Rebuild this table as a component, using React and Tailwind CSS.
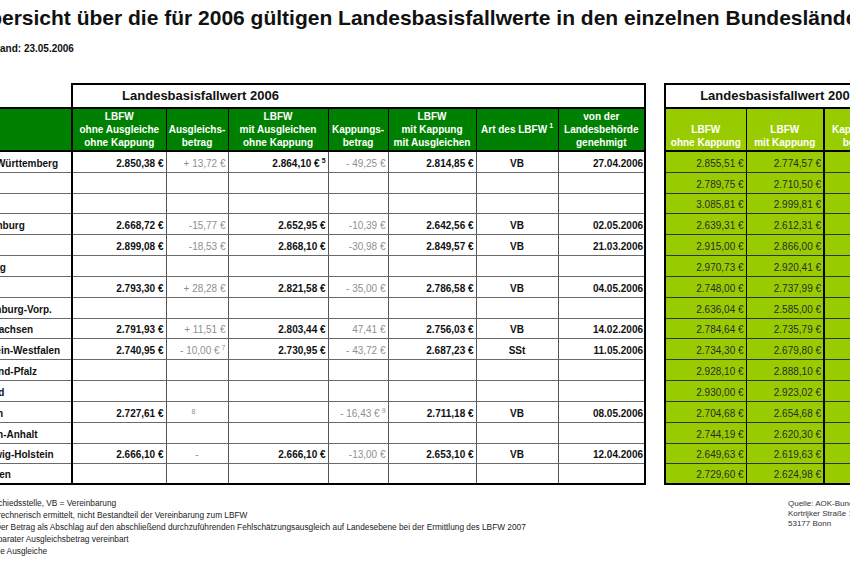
import React from "react";

const ROWH = [
  "h-[21px]", "h-[21px]", "h-[20px]", "h-[21px]", "h-[21px]", "h-[21px]", "h-[21px]", "h-[21px]",
  "h-[20px]", "h-[21px]", "h-[21px]", "h-[21px]", "h-[21px]", "h-[21px]", "h-[20px]", "h-[21px]",
];

const rows = [
  { n: "Baden-Württemberg", a: "2.850,38 €", b: "+ 13,72 €", c: "2.864,10 €", cs: "5", d: "- 49,25 €", e: "2.814,85 €", f: "VB", g: "27.04.2006" },
  { n: "Bayern" },
  { n: "Berlin" },
  { n: "Brandenburg", a: "2.668,72 €", b: "-15,77 €", c: "2.652,95 €", d: "-10,39 €", e: "2.642,56 €", f: "VB", g: "02.05.2006" },
  { n: "Bremen", a: "2.899,08 €", b: "-18,53 €", c: "2.868,10 €", d: "-30,98 €", e: "2.849,57 €", f: "VB", g: "21.03.2006" },
  { n: "Hamburg" },
  { n: "Hessen", a: "2.793,30 €", b: "+ 28,28 €", c: "2.821,58 €", d: "- 35,00 €", e: "2.786,58 €", f: "VB", g: "04.05.2006" },
  { n: "Mecklenburg-Vorp." },
  { n: "Niedersachsen", a: "2.791,93 €", b: "+ 11,51 €", c: "2.803,44 €", d: "47,41 €", e: "2.756,03 €", f: "VB", g: "14.02.2006" },
  { n: "Nordrhein-Westfalen", a: "2.740,95 €", b: "- 10,00 €", bs: "7", c: "2.730,95 €", d: "- 43,72 €", e: "2.687,23 €", f: "SSt", g: "11.05.2006" },
  { n: "Rheinland-Pfalz" },
  { n: "Saarland" },
  { n: "Sachsen", a: "2.727,61 €", b8: true, d: "- 16,43 €", ds: "9", e: "2.711,18 €", f: "VB", g: "08.05.2006" },
  { n: "Sachsen-Anhalt" },
  { n: "Schleswig-Holstein", a: "2.666,10 €", b: "-", bc: true, c: "2.666,10 €", d: "-13,00 €", e: "2.653,10 €", f: "VB", g: "12.04.2006" },
  { n: "Thüringen" },
];

const green = [
  ["2.855,51 €", "2.774,57 €"],
  ["2.789,75 €", "2.710,50 €"],
  ["3.085,81 €", "2.999,81 €"],
  ["2.639,31 €", "2.612,31 €"],
  ["2.915,00 €", "2.866,00 €"],
  ["2.970,73 €", "2.920,41 €"],
  ["2.748,00 €", "2.737,99 €"],
  ["2.636,04 €", "2.585,00 €"],
  ["2.784,64 €", "2.735,79 €"],
  ["2.734,30 €", "2.679,80 €"],
  ["2.928,10 €", "2.888,10 €"],
  ["2.930,00 €", "2.923,02 €"],
  ["2.704,68 €", "2.654,68 €"],
  ["2.744,19 €", "2.620,30 €"],
  ["2.649,63 €", "2.619,63 €"],
  ["2.729,60 €", "2.624,98 €"],
];

function Sup({ children }) {
  return <span className="text-[7px] leading-[7px] align-top relative top-[-1px] ml-[2px]">{children}</span>;
}

function MainTable() {
  const hd = "bg-[#008000] text-white font-bold text-[10px] leading-[13px] text-center align-bottom pb-[1px] border-t-2 border-b-2 border-black border-r px-0 whitespace-nowrap";
  return (
    <table className="table-fixed border-collapse w-[685px] shrink-0">
      <colgroup>
        <col className="w-[112px]" />
        <col className="w-[94px]" />
        <col className="w-[62px]" />
        <col className="w-[100px]" />
        <col className="w-[60px]" />
        <col className="w-[88px]" />
        <col className="w-[82px]" />
        <col className="w-[87px]" />
      </colgroup>
      <tbody>
        <tr className="h-[24px]">
          <td />
          <td colSpan={3} className="border-t-2 border-l-2 border-black text-center align-middle text-[13px] font-bold text-[#111]">
            Landesbasisfallwert 2006
          </td>
          <td colSpan={4} className="border-t-2 border-r-2 border-black" />
        </tr>
        <tr className="h-[43px]">
          <td className="bg-[#008000] border-t-2 border-b-2 border-r-2 border-black" />
          <td className={hd}>LBFW<br />ohne Ausgleiche<br />ohne Kappung</td>
          <td className={hd}>Ausgleichs-<br />betrag</td>
          <td className={hd}>LBFW<br />mit Ausgleichen<br />ohne Kappung</td>
          <td className={hd}>Kappungs-<br />betrag</td>
          <td className={hd}>LBFW<br />mit Kappung<br />mit Ausgleichen</td>
          <td className={hd + " pb-[14px]"}>Art des LBFW<Sup>1</Sup></td>
          <td className={hd + " border-r-2"}>von der<br />Landesbehörde<br />genehmigt</td>
        </tr>
        {rows.map((r, i) => {
          const last = i === rows.length - 1;
          const bb = last ? "border-b-2 border-b-black" : "border-b border-b-[#6a6a6a]";
          const cell = "text-[10px] leading-[12px] align-bottom pb-[2px] px-[2px] whitespace-nowrap border-r border-r-[#555] " + bb;
          return (
            <tr key={r.n} className={ROWH[i]}>
              <td className={"text-[10px] leading-[12px] align-bottom pb-[2px] pl-[2px] font-bold text-left whitespace-nowrap overflow-hidden border-r-2 border-r-black text-[#111] " + bb}>
                {r.n}
              </td>
              <td className={cell + " text-right font-bold text-[#111]"}>{r.a}</td>
              {r.b8 ? (
                <td className={cell + " text-left align-top pt-[3px] pl-[25px] text-[#8f8f8f]"}>
                  <span className="text-[7px] leading-[7px]">8</span>
                </td>
              ) : (
                <td className={cell + (r.bc ? " text-center" : " text-right") + " text-[#8f8f8f]"}>
                  {r.b}
                  {r.bs && <Sup>{r.bs}</Sup>}
                </td>
              )}
              <td className={cell + " text-right font-bold text-[#111]"}>
                {r.c}
                {r.cs && <Sup>{r.cs}</Sup>}
              </td>
              <td className={cell + " text-right text-[#8f8f8f]"}>
                {r.d}
                {r.ds && <Sup>{r.ds}</Sup>}
              </td>
              <td className={cell + " text-right font-bold text-[#111]"}>{r.e}</td>
              <td className={cell + " text-center font-bold text-[#111]"}>{r.f}</td>
              <td className={"text-[10px] leading-[12px] align-bottom pb-[2px] pl-[2px] pr-[1px] whitespace-nowrap text-right font-bold text-[#111] border-r-2 border-r-black " + bb}>
                {r.g}
              </td>
            </tr>
          );
        })}
      </tbody>
    </table>
  );
}

function GreenTable() {
  const hd = "bg-[#99cc00] text-white font-bold text-[10px] leading-[13px] text-center align-bottom pb-[1px] border-t-2 border-b-2 border-black whitespace-nowrap";
  return (
    <table className="table-fixed border-collapse w-[227px] shrink-0">
      <colgroup>
        <col className="w-[81px]" />
        <col className="w-[78px]" />
        <col className="w-[68px]" />
      </colgroup>
      <tbody>
        <tr className="h-[24px]">
          <td colSpan={3} className="border-2 border-b-0 border-black text-center align-middle text-[13px] font-bold text-[#111] whitespace-nowrap">
            Landesbasisfallwert 2005
          </td>
        </tr>
        <tr className="h-[43px]">
          <td className={hd + " border-l-2 border-r"}>LBFW<br />ohne Kappung</td>
          <td className={hd + " border-r-2"}>LBFW<br />mit Kappung</td>
          <td className={hd + " border-r-2"}>Kappungs-<br />betrag</td>
        </tr>
        {green.map((g, i) => {
          const last = i === green.length - 1;
          const bb = last ? "border-b-2 border-b-black" : "border-b border-b-[#333]";
          const cell = "bg-[#99cc00] text-[10px] leading-[12px] align-bottom pb-[2px] px-[2px] whitespace-nowrap text-right text-[#2a2a2a] " + bb;
          return (
            <tr key={i} className={ROWH[i]}>
              <td className={cell + " border-l-2 border-l-black border-r border-r-black"}>{g[0]}</td>
              <td className={cell + " border-r-2 border-r-black"}>{g[1]}</td>
              <td className={cell + " border-r-2 border-r-black"}></td>
            </tr>
          );
        })}
      </tbody>
    </table>
  );
}

export default function App() {
  return (
    <div className="w-[850px] h-[566px] overflow-hidden bg-white text-[#111] font-['Liberation_Sans',Arial,sans-serif]">
      <div className="pt-[6px] ml-[-26px] whitespace-nowrap text-[21px] leading-[24px] font-bold text-[#111]">
        Übersicht über die für 2006 gültigen Landesbasisfallwerte in den einzelnen Bundesländern
      </div>
      <div className="mt-[13px] ml-[-10px] whitespace-nowrap text-[10px] leading-[12px] font-bold">
        Stand: 23.05.2006
      </div>
      <div className="flex gap-[18px] ml-[-40px] mt-[28px]">
        <MainTable />
        <GreenTable />
      </div>
      <div className="flex mt-[12px]">
        <div className="flex-1 text-[8.3px] leading-[12px] text-[#222] whitespace-nowrap">
          <div className="ml-[-37px]">1 SSt = Schiedsstelle, VB = Vereinbarung</div>
          <div className="ml-[-9px]">2 rechnerisch ermittelt, nicht Bestandteil der Vereinbarung zum LBFW</div>
          <div className="ml-[-12px]">3 Der Betrag als Abschlag auf den abschließend durchzuführenden Fehlschätzungsausgleich auf Landesebene bei der Ermittlung des LBFW 2007</div>
          <div className="ml-[-18px]">4 separater Ausgleichsbetrag vereinbart</div>
          <div className="ml-[-22px]">5 keine Ausgleiche</div>
        </div>
        <div className="w-[62px] shrink-0 pt-[2px] text-[8px] leading-[10px] text-[#333] whitespace-nowrap">
          <div>Quelle: AOK-Bundesverband</div>
          <div>Kortrijker Straße 1</div>
          <div>53177 Bonn</div>
        </div>
      </div>
    </div>
  );
}
